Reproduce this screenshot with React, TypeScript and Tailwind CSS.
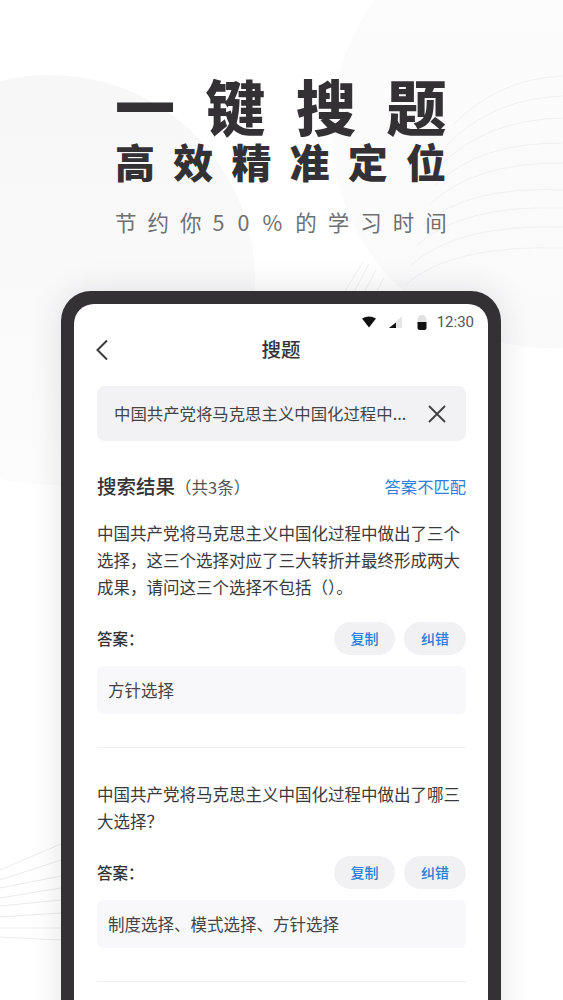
const cjk = "font-['Noto_Sans_CJK_SC','Noto_Sans',sans-serif]";

const arcEnds = [76, 96, 118, 143, 163, 190, 208, 227, 248];

function Arcs({ className }: { className: string }) {
  return (
    <svg className={className} viewBox="340 60 223 240" fill="none">
      {arcEnds.map((y, i) => {
        const sx = 453 - i * 6;
        const sy = 125 + i * 20;
        return (
          <path
            key={y}
            d={`M${sx} ${sy} Q ${sx + 45} ${(sy + y) / 2 - 22}, 563 ${y}`}
            stroke="#eeeef0"
            strokeWidth="0.9"
          />
        );
      })}
      <path d="M363 262 L342 296 M369 264 L352 296 M376 270 L362 296 M384 278 L374 296" stroke="#eeeef0" strokeWidth="0.9" />
    </svg>
  );
}

function AnswerBlock({
  question,
  answer,
  rowGap,
}: {
  question: string[];
  answer: string;
  rowGap: string;
}) {
  return (
    <div>
      <div className="text-[16.5px] leading-[27px] text-[#3a3a3c]">
        {question.map((q) => (
          <div key={q} className="whitespace-nowrap">{q}</div>
        ))}
      </div>
      <div className={`flex h-[33px] items-center justify-between ${rowGap}`}>
        <span className="text-[15.5px] font-medium text-[#333336]">{"答案\uFF1A"}</span>
        <div className="flex gap-[9px]">
          <button className="h-[33px] w-[61px] rounded-full bg-[#f1f1f4] text-[14px] font-medium text-[#2a7bdc]">复制</button>
          <button className="h-[33px] w-[62px] rounded-full bg-[#f1f1f4] text-[14px] font-medium text-[#2a7bdc]">纠错</button>
        </div>
      </div>
      <div className="mt-[11px] flex h-[48px] items-center rounded-md bg-[#f8f8fa] pl-[11px] text-[16.5px] text-[#444447]">{answer}</div>
      <div className="mt-[33px] h-px bg-[#f0f0f2]" />
    </div>
  );
}

export default function App() {
  return (
    <div className={`relative h-[1000px] w-[563px] overflow-hidden bg-white ${cjk}`}>
      {/* soft background shapes */}
      <div className="absolute left-[-155px] top-[75px] h-[410px] w-[410px] rounded-full bg-gradient-to-b from-[#f7f7f8] to-[#fcfcfd]" />
      <div className="absolute left-[332px] top-[-88px] h-[436px] w-[436px] rounded-full bg-gradient-to-b from-[#fcfcfd] to-[#fafafb]" />
      <Arcs className="absolute left-[340px] top-[60px] h-[240px] w-[223px]" />
      <svg className="absolute left-0 top-[810px] h-[140px] w-[61px]" viewBox="0 0 61 140" fill="none">
        <path d="M0 60 L61 34" stroke="#ebebed" />
        <path d="M0 70 L61 50" stroke="#ebebed" />
        <path d="M0 78 L61 66" stroke="#ebebed" />
        <path d="M0 88 L61 78" stroke="#ebebed" />
        <path d="M0 96 L61 90" stroke="#ebebed" />
        <path d="M0 107 L61 103" stroke="#ebebed" />
        <path d="M0 118 L61 118" stroke="#ebebed" />
        <path d="M0 127 L61 130" stroke="#ebebed" />
        <path d="M0 141 L61 143" stroke="#ebebed" />
      </svg>

      <div className="relative flex flex-col">
        {/* headline */}
        <div className="pl-[115px] pt-[71px] text-[#333134]">
          <div className="whitespace-nowrap text-[60px] font-black leading-[68px] tracking-[30.5px]">一键搜题</div>
          <div className="whitespace-nowrap text-[40px] font-black leading-[44px] tracking-[18.2px]">高效精准定位</div>
          <div className="mt-[23px] whitespace-nowrap text-[21.5px] leading-[32px] tracking-[11px] text-[#707072]">
            节约你<span className="tracking-[13px]">50%</span>的学习时间
          </div>
        </div>

        {/* phone */}
        <div className="ml-[61px] mt-[53px] h-[760px] w-[440px] rounded-t-[30px] bg-[#333134] px-[13px] pt-[13px] shadow-[0_0_32px_rgba(40,40,50,0.13)]">
          <div className="h-full rounded-t-[20px] bg-white pl-[23px] pr-[22px]">
            <div className="flex h-[28px] items-end justify-end pb-[1px]">
              <div className="mr-[-8px] flex items-center">
                <svg width="14" height="12" viewBox="0 0 14 12" className="mr-[13px]">
                  <path d="M0 2.5 Q7 -1.5 14 2.5 L7 11.5 Z" fill="#111" />
                </svg>
                <svg width="14" height="12" viewBox="0 0 14 12" className="mr-[14px]">
                  <path d="M13 0 V12 H0 Z" fill="#e6e6e6" />
                  <path d="M7 6.5 V12 H0 Z" fill="#111" />
                </svg>
                <svg width="10" height="15" viewBox="0 0 10 15" className="mr-[10px]">
                  <path d="M3 0 H7 L9.5 3 V7 H0.5 V3 Z" fill="#e2e2e2" />
                  <path d="M0.5 7 H9.5 V13 Q9.5 15 7.5 15 H2.5 Q0.5 15 0.5 13 Z" fill="#111" />
                </svg>
                <span className="font-['Roboto',sans-serif] text-[15px] leading-[18px] text-[#555]">12:30</span>
              </div>
            </div>
            <div className="relative mt-[2px] flex h-[30px] items-center justify-center pr-px">
              <svg className="absolute left-[-1px] top-[5px]" width="12" height="22" viewBox="0 0 12 22" fill="none">
                <path d="M11 1.5 L1.5 11 L11 20.5" stroke="#3a3a3c" strokeWidth="2" />
              </svg>
              <span className="text-[19.5px] font-medium text-[#333336]">搜题</span>
            </div>
            <div className="mt-[22px] flex h-[55px] items-center rounded-lg bg-[#f2f2f4] pl-[17px] pr-[20px]">
              <span className="flex-1 whitespace-nowrap text-[16.4px] text-[#444447]">中国共产党将马克思主义中国化过程中...</span>
              <svg width="18" height="18" viewBox="0 0 18 18" fill="none">
                <path d="M1 1 L17 17 M17 1 L1 17" stroke="#3f3f42" strokeWidth="1.8" />
              </svg>
            </div>
            <div className="mt-[29px] flex h-[32px] items-center justify-between">
              <div className="flex items-baseline">
                <span className="text-[19.5px] font-medium text-[#333336]">搜索结果</span>
                <span className="text-[16.5px] text-[#555558]">{"\uFF08共3条\uFF09"}</span>
              </div>
              <span className="text-[16.3px] text-[#2e7fdc]">答案不匹配</span>
            </div>
            <div className="mt-[18px] flex flex-col gap-[33px]">
              <AnswerBlock
                question={[
                  "中国共产党将马克思主义中国化过程中做出了三个",
                  "选择\uFF0C这三个选择对应了三大转折并最终形成两大",
                  "成果\uFF0C请问这三个选择不包括\uFF08\uFF09\u3002",
                ]}
                answer="方针选择"
                rowGap="mt-[21px]"
              />
              <AnswerBlock
                question={["中国共产党将马克思主义中国化过程中做出了哪三", "大选择\uFF1F"]}
                answer={"制度选择\u3001模式选择\u3001方针选择"}
                rowGap="mt-[21px]"
              />
            </div>
          </div>
        </div>
      </div>
    </div>
  );
}
